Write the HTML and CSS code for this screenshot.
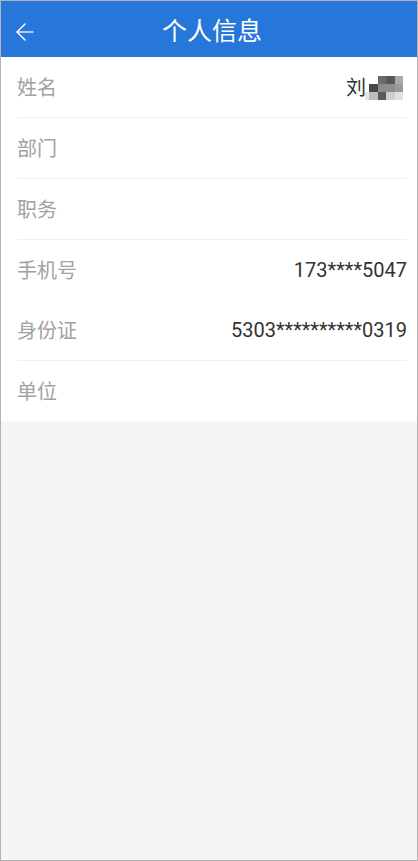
FILE: index.html
```html
<!DOCTYPE html>
<html lang="zh">
<head>
<meta charset="utf-8">
<title>个人信息</title>
<link rel="stylesheet" href="styles.css">
</head>
<body>
<div class="frame">
  <header class="topbar">
    <span class="back">
      <svg width="20" height="20" viewBox="0 0 20 20" fill="none" stroke="#fff" stroke-width="1.5" stroke-linecap="round" stroke-linejoin="round">
        <path d="M9 1 L1 9 L9 17"/>
        <path d="M1.5 9 H17" stroke-opacity="0.85"/>
      </svg>
    </span>
    <h1 class="title">个人信息</h1>
  </header>
  <section class="list">
    <div class="row line">
      <span class="label">姓名</span>
      <span class="value name">刘<span class="mosaic">
        <i style="background:#fff"></i><i style="background:#fff"></i><i style="background:#6b6b6b"></i><i style="background:#585858"></i><i style="background:#a8a8a8"></i>
        <i style="background:#fff"></i><i style="background:#474747"></i><i style="background:#8c8c8c"></i><i style="background:#8e8e8e"></i><i style="background:#9a9a9a"></i>
        <i style="background:#e8e8e8"></i><i style="background:#bdbdbd"></i><i style="background:#5a5a5a"></i><i style="background:#cfcfcf"></i><i style="background:#e0e0e0"></i>
      </span></span>
    </div>
    <div class="row line">
      <span class="label">部门</span>
      <span class="value"></span>
    </div>
    <div class="row line">
      <span class="label">职务</span>
      <span class="value"></span>
    </div>
    <div class="row">
      <span class="label">手机号</span>
      <span class="value">173****5047</span>
    </div>
    <div class="row line">
      <span class="label">身份证</span>
      <span class="value">5303**********0319</span>
    </div>
    <div class="row">
      <span class="label">单位</span>
      <span class="value"></span>
    </div>
  </section>
</div>
</body>
</html>
```
FILE: styles.css
```css
* { box-sizing: border-box; }
html, body { margin: 0; padding: 0; }
body {
  font-family: Roboto, "Noto Sans CJK SC", sans-serif;
  background: #f5f5f5;
}
.frame {
  width: 418px;
  height: 861px;
  border: 1px solid #b3b3b3;
  background: #f5f5f5;
  overflow: hidden;
}
.topbar {
  height: 56px;
  background: #2776d9;
  display: flex;
  align-items: center;
  position: relative;
}
.back {
  position: absolute;
  left: 15px;
  top: 22px;
  width: 20px;
  height: 20px;
  display: flex;
}
.title {
  margin: 0 auto;
  font-size: 25px;
  font-weight: 400;
  color: #fff;
  line-height: 1;
  font-family: "Noto Sans CJK SC", sans-serif;
  padding-left: 6px;
}
.list {
  background: #fff;
  padding: 0 10px 0 16px;
}
.row {
  height: 60px;
  display: flex;
  align-items: center;
  justify-content: space-between;
}
.row.line {
  height: 61px;
  border-bottom: 1px solid #efefef;
}
.label {
  font-size: 20px;
  color: #a0a2a6;
  font-family: "Noto Sans CJK SC", sans-serif;
  line-height: 1;
}
.value {
  font-size: 20px;
  color: #333;
  line-height: 1;
  font-family: Roboto, "Noto Sans CJK SC", sans-serif;
}
.name {
  display: flex;
  align-items: center;
  font-family: "Noto Sans CJK SC", sans-serif;
}
.mosaic {
  display: grid;
  grid-template-columns: 4px repeat(4, 8.5px);
  grid-template-rows: repeat(3, 8px);
  margin: 2px 4px 0 -1px;
}
.mosaic i { display: block; }
```
